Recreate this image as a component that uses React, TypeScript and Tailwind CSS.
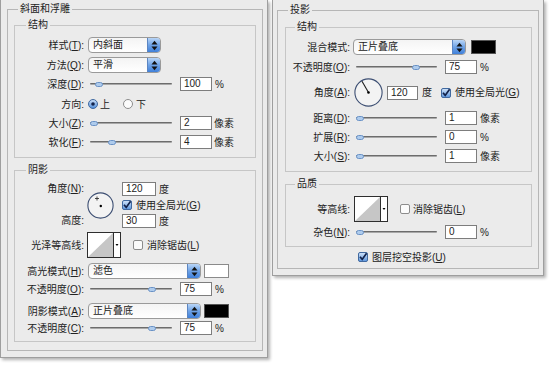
import React, { useId } from 'react';

// accelerator label: 样式(T):
const Acc = ({ t, k }: { t: string; k?: string }) => (
  <span>
    {t}
    {k && (
      <>
        (<span className="underline underline-offset-1">{k}</span>)
      </>
    )}
    :
  </span>
);

const Row: React.FC<{ label: React.ReactNode; lw: string; cls: string; children?: React.ReactNode }> = ({
  label,
  lw,
  cls,
  children,
}) => (
  <div className={`flex items-center ${cls}`}>
    <div className={`${lw} shrink-0 whitespace-nowrap text-right`}>{label}</div>
    {children}
  </div>
);

const Select = ({ value, cls }: { value: string; cls: string }) => (
  <div className={`flex h-[16px] overflow-hidden rounded-[4px] border border-[#9a9a9a] bg-gradient-to-b from-[#f4f4f4] to-white ${cls}`}>
    <span className="flex-1 pl-[4px] leading-[14px]">{value}</span>
    <span className="flex w-[13px] items-center justify-center border-l border-[#5b85c2] bg-gradient-to-b from-[#b9d5f6] via-[#6fa3e6] to-[#3f80da]">
      <svg width="7" height="11" viewBox="0 0 7 11">
        <polygon points="0.5,4.5 3.5,0.8 6.5,4.5" fill="#111" />
        <polygon points="0.5,6.5 3.5,10.2 6.5,6.5" fill="#111" />
      </svg>
    </span>
  </div>
);

const Slider = ({ pos, cls }: { pos: number; cls: string }) => (
  <div className={`relative h-[8px] ${cls}`}>
    <div className="absolute inset-x-0 top-[3px] h-[2px] rounded-full border-t border-[#6c6c6c] bg-[#a8a8a8]" />
    <div
      className="absolute top-[1.5px] h-[5px] w-[8px] rounded-full border border-[#6a92c6] bg-[#aecbec]"
      style={{ left: pos }}
    />
  </div>
);

const NumBox = ({ value, cls }: { value: string; cls: string }) => (
  <div className={`h-[14px] border border-[#7d7d7d] bg-white pl-[3px] leading-[12px] ${cls}`}>{value}</div>
);

const Check = ({ on, cls }: { on?: boolean; cls?: string }) => {
  const id = useId();
  return (
    <svg width="10" height="10" viewBox="0 0 10 10" className={`shrink-0 ${cls ?? ''}`}>
      <defs>
        <linearGradient id={id} x1="0" y1="0" x2="0" y2="1">
          <stop offset="0" stopColor="#d3e5fa" />
          <stop offset="1" stopColor="#5b95dd" />
        </linearGradient>
      </defs>
      {on ? (
        <>
          <rect x="0.5" y="0.5" width="9" height="9" rx="1.5" fill={`url(#${id})`} stroke="#41699f" />
          <path d="M2 4.8 L4.2 7.4 L8.6 1.2" stroke="#12224a" strokeWidth="1.7" fill="none" />
        </>
      ) : (
        <rect x="0.5" y="0.5" width="9" height="9" rx="1.5" fill="#fbfbfb" stroke="#8c8c8c" />
      )}
    </svg>
  );
};

const Radio = ({ on, cls }: { on?: boolean; cls?: string }) => {
  const id = useId();
  return (
    <svg width="10" height="10" viewBox="0 0 10 10" className={`shrink-0 ${cls ?? ''}`}>
      <defs>
        <linearGradient id={id} x1="0" y1="0" x2="0" y2="1">
          <stop offset="0" stopColor="#cfe2f9" />
          <stop offset="1" stopColor="#4f8ddb" />
        </linearGradient>
      </defs>
      {on ? (
        <>
          <circle cx="5" cy="5" r="4.5" fill={`url(#${id})`} stroke="#41699f" />
          <circle cx="5" cy="5" r="1.8" fill="#12224a" />
        </>
      ) : (
        <circle cx="5" cy="5" r="4.5" fill="#fbfbfb" stroke="#8c8c8c" />
      )}
    </svg>
  );
};

const Contour = ({ cls }: { cls: string }) => (
  <svg width="34" height="26" viewBox="0 0 34 26" className={`shrink-0 ${cls}`}>
    <rect x="0.5" y="0.5" width="33" height="25" fill="#fff" stroke="#2e2e2e" />
    <polygon points="1,25 26,1 26,25" fill="#c6c6c6" />
    <line x1="26.5" y1="0.5" x2="26.5" y2="25.5" stroke="#2e2e2e" />
    <polygon points="28.5,12 31.5,12 30,14" fill="#000" />
  </svg>
);

const Swatch = ({ cls }: { cls: string }) => <div className={`h-[14px] w-[25px] border ${cls}`} />;

function BevelPanel() {
  return (
    <div className="w-[268px] shrink-0 border-x border-b border-[#9e9e9e] bg-[#ebebeb] pb-[6px] pl-[6px] pr-[4px] shadow-[2px_2px_3px_rgba(0,0,0,0.3)]">
      <fieldset className="border border-[#b6b6b6] pb-[8px]">
        <legend className="ml-[10px] px-[2px] leading-[18px]">斜面和浮雕</legend>

        <fieldset className="mx-[6px] border border-[#c6c6c6] pb-[8px]">
          <legend className="ml-[11px] px-[2px] leading-[14px]">结构</legend>
          <Row lw="w-[69px]" cls="mt-[5px] h-[16px]" label={<Acc t="样式" k="T" />}>
            <Select value="内斜面" cls="ml-[4px] w-[73px]" />
          </Row>
          <Row lw="w-[69px]" cls="mt-[4px] h-[16px]" label={<Acc t="方法" k="Q" />}>
            <Select value="平滑" cls="ml-[4px] w-[73px]" />
          </Row>
          <Row lw="w-[69px]" cls="mt-[4px] h-[14px]" label={<Acc t="深度" k="D" />}>
            <Slider pos={5} cls="ml-[6px] w-[82px]" />
            <NumBox value="100" cls="ml-[8px] w-[32px]" />
            <span className="ml-[3px]">%</span>
          </Row>
          <Row lw="w-[69px]" cls="mt-[6px] h-[14px]" label={<Acc t="方向" />}>
            <Radio on cls="ml-[4px]" />
            <span className="ml-[2px]">上</span>
            <Radio cls="ml-[13px]" />
            <span className="ml-[3px]">下</span>
          </Row>
          <Row lw="w-[69px]" cls="mt-[5px] h-[14px]" label={<Acc t="大小" k="Z" />}>
            <Slider pos={0} cls="ml-[6px] w-[82px]" />
            <NumBox value="2" cls="ml-[8px] w-[32px]" />
            <span className="ml-[2px]">像素</span>
          </Row>
          <Row lw="w-[69px]" cls="mt-[5px] h-[14px]" label={<Acc t="软化" k="F" />}>
            <Slider pos={18} cls="ml-[6px] w-[82px]" />
            <NumBox value="4" cls="ml-[8px] w-[32px]" />
            <span className="ml-[2px]">像素</span>
          </Row>
        </fieldset>

        <fieldset className="mx-[6px] mt-[5px] border border-[#c6c6c6] pb-[6px]">
          <legend className="ml-[11px] px-[2px] leading-[14px]">阴影</legend>
          <div className="mt-[5px] flex">
            <div className="flex w-[69px] shrink-0 flex-col justify-between text-right leading-[14px]">
              <Acc t="角度" k="N" />
              <Acc t="高度" />
            </div>
            <svg width="27" height="27" viewBox="0 0 27 27" className="ml-[3px] mt-[10px] shrink-0">
              <circle cx="13.5" cy="13.5" r="12.6" fill="#f3f3f3" stroke="#3d4f73" strokeWidth="1.1" />
              <circle cx="13.8" cy="14" r="1.2" fill="#000" />
              <path d="M10 4.5 V8.5 M8 6.5 H12" stroke="#333" strokeWidth="0.9" />
            </svg>
            <div className="ml-[8px] flex flex-col gap-[2px]">
              <div className="flex h-[14px] items-center">
                <NumBox value="120" cls="w-[34px]" />
                <span className="ml-[3px]">度</span>
              </div>
              <div className="flex h-[14px] items-center">
                <Check on />
                <span className="ml-[4px]">
                  使用全局光(<span className="underline underline-offset-1">G</span>)
                </span>
              </div>
              <div className="flex h-[14px] items-center">
                <NumBox value="30" cls="w-[34px]" />
                <span className="ml-[3px]">度</span>
              </div>
            </div>
          </div>
          <Row lw="w-[69px]" cls="mt-[4px] h-[26px]" label={<Acc t="光泽等高线" />}>
            <Contour cls="ml-[3px]" />
            <Check cls="ml-[12px]" />
            <span className="ml-[4px]">
              消除锯齿(<span className="underline underline-offset-1">L</span>)
            </span>
          </Row>
          <Row lw="w-[69px]" cls="mt-[5px] h-[16px]" label={<Acc t="高光模式" k="H" />}>
            <Select value="滤色" cls="ml-[4px] w-[113px]" />
            <Swatch cls="ml-[3px] border-[#8a8a8a] bg-white" />
          </Row>
          <Row lw="w-[69px]" cls="mt-[3px] h-[14px]" label={<Acc t="不透明度" k="O" />}>
            <Slider pos={58} cls="ml-[6px] w-[82px]" />
            <NumBox value="75" cls="ml-[8px] w-[32px]" />
            <span className="ml-[3px]">%</span>
          </Row>
          <Row lw="w-[69px]" cls="mt-[7px] h-[16px]" label={<Acc t="阴影模式" k="A" />}>
            <Select value="正片叠底" cls="ml-[4px] w-[113px]" />
            <Swatch cls="ml-[3px] border-[#555] bg-black" />
          </Row>
          <Row lw="w-[69px]" cls="mt-[2px] h-[14px]" label={<Acc t="不透明度" k="C" />}>
            <Slider pos={58} cls="ml-[6px] w-[82px]" />
            <NumBox value="75" cls="ml-[8px] w-[32px]" />
            <span className="ml-[3px]">%</span>
          </Row>
        </fieldset>
      </fieldset>
    </div>
  );
}

function ShadowPanel() {
  return (
    <div className="ml-[4px] w-[272px] shrink-0 border-x border-b border-[#9e9e9e] bg-[#ebebeb] pb-[6px] pl-[4px] pr-[4px] pt-[1px] shadow-[2px_2px_3px_rgba(0,0,0,0.3)]">
      <fieldset className="w-[262px] border border-[#b6b6b6] pb-[4px]">
        <legend className="ml-[10px] px-[2px] leading-[18px]">投影</legend>

        <fieldset className="ml-[7px] mr-[6px] mt-[1px] border border-[#c6c6c6] pb-[8px]">
          <legend className="ml-[9px] px-[2px] leading-[14px]">结构</legend>
          <Row lw="w-[64px]" cls="mt-[5px] h-[16px]" label={<Acc t="混合模式" />}>
            <Select value="正片叠底" cls="ml-[3px] w-[113px]" />
            <Swatch cls="ml-[5px] border-[#555] bg-black" />
          </Row>
          <Row lw="w-[64px]" cls="mt-[5px] h-[14px]" label={<Acc t="不透明度" k="O" />}>
            <Slider pos={56} cls="ml-[6px] w-[81px]" />
            <NumBox value="75" cls="ml-[8px] w-[32px]" />
            <span className="ml-[3px]">%</span>
          </Row>
          <Row lw="w-[64px]" cls="mt-[4px] h-[29px]" label={<Acc t="角度" k="A" />}>
            <svg width="29" height="29" viewBox="0 0 29 29" className="ml-[4px] shrink-0">
              <circle cx="14.5" cy="14.5" r="13.6" fill="#f3f3f3" stroke="#3d4f73" strokeWidth="1.1" />
              <line x1="14.5" y1="14.5" x2="8" y2="3.2" stroke="#1d1d1d" strokeWidth="1.1" />
              <circle cx="14.5" cy="14.5" r="1.3" fill="#000" />
            </svg>
            <NumBox value="120" cls="ml-[4px] w-[31px]" />
            <span className="ml-[4px]">度</span>
            <Check on cls="ml-[9px]" />
            <span className="ml-[4px]">
              使用全局光(<span className="underline underline-offset-1">G</span>)
            </span>
          </Row>
          <Row lw="w-[64px]" cls="mt-[4px] h-[14px]" label={<Acc t="距离" k="D" />}>
            <Slider pos={0} cls="ml-[6px] w-[81px]" />
            <NumBox value="1" cls="ml-[8px] w-[32px]" />
            <span className="ml-[3px]">像素</span>
          </Row>
          <Row lw="w-[64px]" cls="mt-[5px] h-[14px]" label={<Acc t="扩展" k="R" />}>
            <Slider pos={0} cls="ml-[6px] w-[81px]" />
            <NumBox value="0" cls="ml-[8px] w-[32px]" />
            <span className="ml-[3px]">%</span>
          </Row>
          <Row lw="w-[64px]" cls="mt-[5px] h-[14px]" label={<Acc t="大小" k="S" />}>
            <Slider pos={0} cls="ml-[6px] w-[81px]" />
            <NumBox value="1" cls="ml-[8px] w-[32px]" />
            <span className="ml-[3px]">像素</span>
          </Row>
        </fieldset>

        <fieldset className="ml-[7px] mr-[6px] mt-[5px] border border-[#c6c6c6] pb-[7px]">
          <legend className="ml-[9px] px-[2px] leading-[14px]">品质</legend>
          <Row lw="w-[64px]" cls="mt-[5px] h-[26px]" label={<Acc t="等高线" />}>
            <Contour cls="ml-[4px]" />
            <Check cls="ml-[12px]" />
            <span className="ml-[3px]">
              消除锯齿(<span className="underline underline-offset-1">L</span>)
            </span>
          </Row>
          <Row lw="w-[64px]" cls="mt-[3px] h-[14px]" label={<Acc t="杂色" k="N" />}>
            <Slider pos={0} cls="ml-[6px] w-[81px]" />
            <NumBox value="0" cls="ml-[8px] w-[32px]" />
            <span className="ml-[3px]">%</span>
          </Row>
        </fieldset>

        <div className="ml-[80px] mt-[3px] flex h-[14px] items-center">
          <Check on />
          <span className="ml-[4px]">
            图层挖空投影(<span className="underline underline-offset-1">U</span>)
          </span>
        </div>
      </fieldset>
    </div>
  );
}

export default function App() {
  return (
    <div className="flex h-[366px] w-[552px] items-start overflow-hidden bg-white font-['Liberation_Sans','Noto_Sans_CJK_SC',sans-serif] text-[10px] text-[#222]">
      <BevelPanel />
      <ShadowPanel />
    </div>
  );
}
